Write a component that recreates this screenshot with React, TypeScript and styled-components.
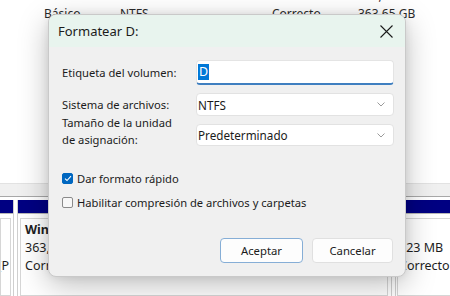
import React from 'react';
import styled, { createGlobalStyle } from 'styled-components';

const GlobalStyle = createGlobalStyle`
  html, body {
    margin: 0;
    padding: 0;
  }
  body {
    width: 450px;
    height: 296px;
    overflow: hidden;
    background: #ffffff;
    font-family: "Segoe UI", "Noto Sans", "Open Sans", sans-serif;
  }
`;

const Screen = styled.div`
  position: relative;
  width: 450px;
  height: 296px;
  overflow: hidden;
  display: flex;
  flex-direction: column;
  background: #ffffff;
`;

// ---- volume list behind the dialog ----
const VolumeList = styled.div`
  flex: none;
  height: 183px;
  overflow: hidden;
`;

const ListRows = styled.div`
  display: flex;
  flex-direction: column;
  margin-top: -14px;
`;

const ListRow = styled.div`
  display: grid;
  grid-template-columns: 76px 152px 86px auto;
  padding-left: 44px;
  height: 18px;
  align-items: center;
  font-size: 12px;
  color: #2b2b2b;
  white-space: nowrap;
`;

const Cell = styled.span<{ $clip?: number }>`
  overflow: hidden;
  max-width: ${(p) => (p.$clip ? `${p.$clip}px` : 'none')};
`;

// ---- disk map ----
const Splitter = styled.div`
  flex: none;
  height: 12px;
  background: #f0f0f0;
  border-top: 1px solid #e2e2e2;
  border-bottom: 1px solid #a8a8a8;
  margin-bottom: 3px;
`;

const DiskRow = styled.div`
  flex: 1;
  display: flex;
  gap: 3px;
  background: #ffffff;
`;

const Partition = styled.div<{ $w: number; $first?: boolean }>`
  flex: none;
  width: ${(p) => p.$w}px;
  display: flex;
  flex-direction: column;
  border-left: ${(p) => (p.$first ? 'none' : '1px solid #cfcfcf')};
  border-right: 1px solid #cfcfcf;
`;

const PartitionBar = styled.div`
  height: 13px;
  background: #000082;
`;

const PartitionBody = styled.div<{ $pad: string }>`
  flex: 1;
  padding: ${(p) => p.$pad};
  display: flex;
  border-top: 1px solid #b8b8b8;
`;

const PartitionBox = styled.div<{ $end?: boolean; $pad: string }>`
  flex: 1;
  border: 1px solid #d6d6d6;
  padding: ${(p) => p.$pad};
  display: flex;
  flex-direction: column;
  align-items: ${(p) => (p.$end ? 'flex-end' : 'flex-start')};
  overflow: hidden;
  font-size: 12.5px;
  color: #1e1e1e;
  white-space: nowrap;
`;

const PartLine = styled.div<{ $bold?: boolean }>`
  height: 18px;
  line-height: 18px;
  font-weight: ${(p) => (p.$bold ? 700 : 400)};
`;

// ---- dialog ----
const Dialog = styled.div`
  position: absolute;
  left: 48px;
  top: 14px;
  width: 358px;
  height: 263px;
  box-sizing: border-box;
  border: 1px solid #c9c9c9;
  border-radius: 8px;
  overflow: hidden;
  background: #f0f0f0;
  box-shadow: 0 8px 30px rgba(0, 0, 0, 0.26), 0 0 8px rgba(0, 0, 0, 0.08);
  display: flex;
  flex-direction: column;
`;

const TitleBar = styled.div`
  flex: none;
  height: 32px;
  padding: 0 12px 0 9px;
  display: flex;
  align-items: center;
  justify-content: space-between;
  background: #e8f4ee;
`;

const Title = styled.span`
  font-size: 13px;
  color: #1b1b1b;
`;

const CloseButton = styled.div`
  width: 14px;
  height: 14px;
  display: flex;
  align-items: center;
  justify-content: center;
`;

const DialogBody = styled.div`
  flex: 1;
  display: flex;
  flex-direction: column;
  padding: 13px 11px 13px 13px;
`;

const Form = styled.div`
  display: grid;
  grid-template-columns: 134px 1fr;
  grid-template-rows: 25px 23px 22px;
  row-gap: 8px;
  font-size: 11.2px;
  color: #1b1b1b;
`;

const Label = styled.div<{ $end?: boolean }>`
  align-self: ${(p) => (p.$end ? 'end' : 'center')};
  line-height: 17px;
  margin-bottom: ${(p) => (p.$end ? '-2px' : '0')};
`;

const TextField = styled.div`
  display: flex;
  align-items: center;
  box-sizing: border-box;
  background: #ffffff;
  border: 1px solid #e4e4e4;
  border-bottom: 2px solid #3f7fc0;
  border-radius: 4px;
  padding: 0 0 0 1px;
`;

const Selection = styled.span`
  background: #0078d7;
  color: #ffffff;
  font-size: 12.5px;
  line-height: 16px;
  padding: 0 1px;
`;

const SelectBox = styled.div`
  display: flex;
  align-items: center;
  justify-content: space-between;
  box-sizing: border-box;
  background: #ffffff;
  border: 1px solid #e2e2e2;
  border-radius: 4px;
  padding: 0 8px 0 1px;
  font-size: 11.7px;
`;

const Options = styled.div`
  display: flex;
  flex-direction: column;
  gap: 6px;
  margin-top: 23px;
`;

const CheckRow = styled.label`
  display: flex;
  align-items: center;
  gap: 4px;
  height: 18px;
  font-size: 11.2px;
  color: #1b1b1b;
`;

const CheckBox = styled.span<{ $checked?: boolean }>`
  width: 11px;
  height: 11px;
  box-sizing: border-box;
  border-radius: 2px;
  display: flex;
  align-items: center;
  justify-content: center;
  background: ${(p) => (p.$checked ? '#0067c0' : '#f7f7f7')};
  border: 1px solid ${(p) => (p.$checked ? '#0067c0' : '#8a8a8a')};
`;

const ButtonRow = styled.div`
  margin-top: auto;
  display: flex;
  justify-content: flex-end;
  gap: 9px;
  padding-right: 1px;
`;

const Button = styled.div<{ $primary?: boolean; $w: number }>`
  width: ${(p) => p.$w}px;
  height: 25px;
  box-sizing: border-box;
  display: flex;
  align-items: center;
  justify-content: center;
  background: #fdfdfd;
  border: 1px solid ${(p) => (p.$primary ? '#86aed6' : '#e0e0e0')};
  border-radius: 4px;
  font-size: 11.3px;
  color: #1b1b1b;
`;

const Chevron = () => (
  <svg width="8" height="5" viewBox="0 0 8 5">
    <path d="M0.5 0.5 L4 4 L7.5 0.5" fill="none" stroke="#9a9a9a" strokeWidth="1" />
  </svg>
);

const CheckMark = () => (
  <svg width="8" height="7" viewBox="0 0 8 7">
    <path d="M1 3.6 L3 5.5 L7 1.2" fill="none" stroke="#ffffff" strokeWidth="1.1" />
  </svg>
);

const volumes = [
  ['Básico', 'NTFS', 'Correcto (Arranque', '363,65 GB'],
  ['Básico', 'NTFS', 'Correcto (Partición', '363,65 GB'],
];

export default function App() {
  return (
    <>
      <GlobalStyle />
      <Screen>
        <VolumeList>
          <ListRows>
            {volumes.map((v, i) => (
              <ListRow key={i}>
                {v.map((c, j) => (
                  <Cell key={j} $clip={j === 2 ? 50 : undefined}>
                    {c}
                  </Cell>
                ))}
              </ListRow>
            ))}
          </ListRows>
        </VolumeList>
        <Splitter />
        <DiskRow>
          <Partition $w={13} $first>
            <PartitionBar />
            <PartitionBody $pad="4px 2px 0 0">
              <PartitionBox $end $pad="2px 1px 0 0">
                <PartLine>&nbsp;</PartLine>
                <PartLine>&nbsp;</PartLine>
                <PartLine>Correcto (P</PartLine>
              </PartitionBox>
            </PartitionBody>
          </Partition>
          <Partition $w={373}>
            <PartitionBar />
            <PartitionBody $pad="4px 3px 0 2px">
              <PartitionBox $pad="2px 4px 0">
                <PartLine $bold>Windows (C:)</PartLine>
                <PartLine>363,65 GB NTFS</PartLine>
                <PartLine>Correcto (Arranque, Archivo de paginación)</PartLine>
              </PartitionBox>
            </PartitionBody>
          </Partition>
          <Partition $w={80}>
            <PartitionBar />
            <PartitionBody $pad="4px 0 0 1px">
              <PartitionBox $pad="2px 1px 0">
                <PartLine>&nbsp;</PartLine>
                <PartLine>523 MB</PartLine>
                <PartLine>Correcto (Partición de recuperación)</PartLine>
              </PartitionBox>
            </PartitionBody>
          </Partition>
        </DiskRow>

        <Dialog>
          <TitleBar>
            <Title>Formatear D:</Title>
            <CloseButton>
              <svg width="13" height="13" viewBox="0 0 13 13">
                <path d="M0.5 0.5 L12.5 12.5 M12.5 0.5 L0.5 12.5" stroke="#1b1b1b" strokeWidth="1.1" />
              </svg>
            </CloseButton>
          </TitleBar>
          <DialogBody>
            <Form>
              <Label>Etiqueta del volumen:</Label>
              <TextField>
                <Selection>D</Selection>
              </TextField>
              <Label>Sistema de archivos:</Label>
              <SelectBox>
                <span>NTFS</span>
                <Chevron />
              </SelectBox>
              <Label $end>
                Tamaño de la unidad
                <br />
                de asignación:
              </Label>
              <SelectBox>
                <span>Predeterminado</span>
                <Chevron />
              </SelectBox>
            </Form>
            <Options>
              <CheckRow>
                <CheckBox $checked>
                  <CheckMark />
                </CheckBox>
                Dar formato rápido
              </CheckRow>
              <CheckRow>
                <CheckBox />
                Habilitar compresión de archivos y carpetas
              </CheckRow>
            </Options>
            <ButtonRow>
              <Button $primary $w={83}>Aceptar</Button>
              <Button $w={81}>Cancelar</Button>
            </ButtonRow>
          </DialogBody>
        </Dialog>
      </Screen>
    </>
  );
}
